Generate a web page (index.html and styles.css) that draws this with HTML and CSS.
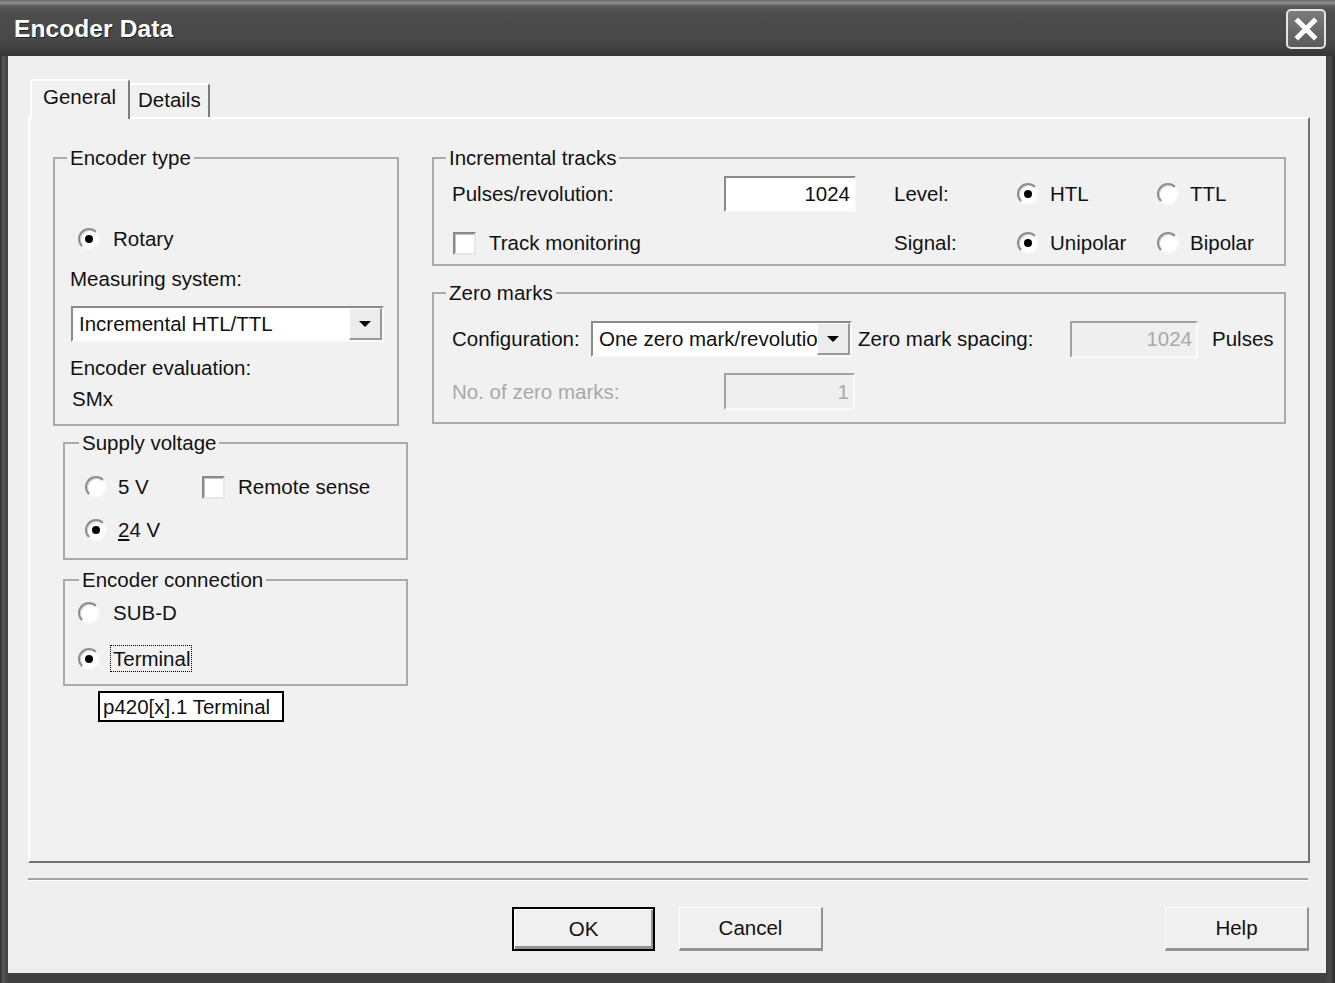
FILE: index.html
```html
<!DOCTYPE html>
<html>
<head>
<meta charset="utf-8">
<title>Encoder Data</title>
<link rel="stylesheet" href="styles.css">
</head>
<body>
<div class="window">
  <div class="titlebar">
    <span class="title">Encoder Data</span>
    <span class="close"><svg width="36" height="36" viewBox="0 0 36 36"><path d="M10 10 L26 26 M26 10 L10 26" stroke="#fff" stroke-width="5" stroke-linecap="square" fill="none"/></svg></span>
  </div>
  <div class="client">
    <div class="tabs">
      <div class="tab active">General</div>
      <div class="tab">Details</div>
    </div>
    <div class="panel">
      <div class="col-left">
        <fieldset class="grp grp-type">
          <legend>Encoder type</legend>
          <div class="opt rotary"><span class="radio on"></span><span>Rotary</span></div>
          <div class="lbl ms">Measuring system:</div>
          <div class="combo combo-ms"><span class="combo-text">Incremental HTL/TTL</span><span class="combo-btn"><span class="tri"></span></span></div>
          <div class="lbl ee">Encoder evaluation:</div>
          <div class="lbl smx">SMx</div>
        </fieldset>
        <fieldset class="grp grp-supply">
          <legend>Supply voltage</legend>
          <div class="supply-row first">
            <div class="opt v5"><span class="radio"></span><span>5 V</span></div>
            <div class="opt"><span class="check"></span><span>Remote sense</span></div>
          </div>
          <div class="supply-row second">
            <div class="opt v5"><span class="radio on"></span><span><u>2</u>4 V</span></div>
          </div>
        </fieldset>
        <fieldset class="grp grp-conn">
          <legend>Encoder connection</legend>
          <div class="opt conn first"><span class="radio"></span><span>SUB-D</span></div>
          <div class="opt conn second"><span class="radio on"></span><span class="focus">Terminal</span>
            <div class="tooltip">p420[x].1 Terminal</div>
          </div>
        </fieldset>
      </div>
      <div class="col-right">
        <fieldset class="grp grp-inc">
          <legend>Incremental tracks</legend>
          <div class="inc-grid">
            <div class="lbl">Pulses/revolution:</div>
            <div class="edit"><span>1024</span></div>
            <div></div>
            <div class="lbl">Level:</div>
            <div class="opt narrow"><span class="radio on"></span><span>HTL</span></div>
            <div class="opt narrow"><span class="radio"></span><span>TTL</span></div>
            <div class="opt track"><span class="check"></span><span>Track monitoring</span></div>
            <div class="lbl">Signal:</div>
            <div class="opt narrow"><span class="radio on"></span><span>Unipolar</span></div>
            <div class="opt narrow"><span class="radio"></span><span>Bipolar</span></div>
          </div>
        </fieldset>
        <fieldset class="grp grp-zero">
          <legend>Zero marks</legend>
          <div class="zero-row first">
            <div class="lbl w-config">Configuration:</div>
            <div class="combo combo-zero"><span class="combo-text">One zero mark/revolution</span><span class="combo-btn"><span class="tri"></span></span></div>
            <div class="lbl w-spacing">Zero mark spacing:</div>
            <div class="edit disabled w-spacing-edit"><span>1024</span></div>
            <div class="lbl pulses">Pulses</div>
          </div>
          <div class="zero-row second">
            <div class="lbl dis w-count">No. of zero marks:</div>
            <div class="edit disabled w-count-edit"><span>1</span></div>
          </div>
        </fieldset>
      </div>
    </div>
    <div class="separator"></div>
    <div class="buttons">
      <div class="btn default">OK</div>
      <div class="btn cancel">Cancel</div>
      <div class="btn help">Help</div>
    </div>
  </div>
</div>
</body>
</html>
```

FILE: styles.css
```css
* { box-sizing: border-box; }
html, body { margin: 0; padding: 0; }
body {
  width: 1335px;
  height: 983px;
  overflow: hidden;
  background: #3c3c3c;
  font-family: "Liberation Sans", Arial, sans-serif;
  font-size: 20.5px;
  color: #111;
}
.window {
  width: 1335px;
  height: 983px;
  display: flex;
  flex-direction: column;
  background: linear-gradient(90deg, #2c2c2c 0, #555 3px, #414141 8px, #414141 1326px, #4a4a4a 1330px, #2a2a2a 1335px);
}
.titlebar {
  height: 56px;
  flex: none;
  display: flex;
  align-items: center;
  justify-content: space-between;
  padding: 1px 9px 0 14px;
  background: linear-gradient(180deg, #6a6a6a 0, #8e8e8e 3px, #5a5a5a 6px, #4c4c4c 14px, #484848 40px, #3e3e3e 50px, #363636 56px);
}
.title {
  color: #fff;
  font-weight: bold;
  font-size: 24.5px;
  letter-spacing: 0.1px;
  text-shadow: 1px 1px 0 #222;
}
.close {
  width: 40px;
  height: 40px;
  border: 2px solid #e4e4e4;
  border-radius: 5px;
  background: linear-gradient(180deg, #7c7c7c, #5a5a5a);
  display: flex;
  align-items: center;
  justify-content: center;
}
.client {
  flex: 1;
  margin: 0 9px 10px 8px;
  background: #efefef;
  padding: 23px 16px 0 20px;
  display: flex;
  flex-direction: column;
}
.tabs {
  display: flex;
  align-items: flex-end;
  height: 40px;
  margin-left: 2px;
  margin-bottom: -2px;
  position: relative;
  z-index: 1;
}
.tab {
  background: #f1f1f1;
  line-height: 24px;
}
.tab.active {
  width: 100px;
  height: 40px;
  border-top: 2px solid #fff;
  border-left: 2px solid #fff;
  border-right: 2px solid #7c7c7c;
  border-radius: 3px 3px 0 0;
  padding: 4px 0 0 11px;
}
.tab:not(.active) {
  width: 80px;
  height: 34px;
  margin-bottom: 2px;
  border-top: 2px solid #fff;
  border-right: 2px solid #7c7c7c;
  border-radius: 0 3px 0 0;
  padding: 3px 0 0 8px;
}
.panel {
  height: 746px;
  flex: none;
  background: #f1f1f1;
  border-top: 2px solid #fff;
  border-left: 2px solid #fff;
  border-right: 2px solid #727272;
  border-bottom: 2px solid #727272;
  display: grid;
  grid-template-columns: 355px 854px;
  column-gap: 24px;
  align-items: start;
  padding: 27px 23px 0 23px;
}
.col-left, .col-right {
  display: flex;
  flex-direction: column;
  align-items: flex-start;
}
.grp {
  margin: 0;
  padding: 0;
  min-width: 0;
  border: 2px solid #aaaaaa;
  display: flex;
  flex-direction: column;
  align-items: flex-start;
}
.grp legend {
  padding: 0 3px;
  margin-left: 12px;
  line-height: 24px;
  height: 24px;
}
.lbl {
  line-height: 26px;
  height: 26px;
  white-space: nowrap;
}
.lbl.dis { color: #a9a9a9; }
.opt {
  display: flex;
  align-items: center;
  height: 26px;
  white-space: nowrap;
}
.radio {
  width: 22px;
  height: 22px;
  flex: none;
  border-radius: 50%;
  background: #fff;
  border: 2px solid;
  border-color: #8d8d8d #f8f8f8 #f8f8f8 #8d8d8d;
  box-shadow: inset 1px 1px 0 #d2d2d2;
  margin-right: 13px;
  display: flex;
  align-items: center;
  justify-content: center;
}
.radio.on::after {
  content: "";
  width: 8px;
  height: 8px;
  border-radius: 50%;
  background: #000;
}
.check {
  width: 23px;
  height: 23px;
  flex: none;
  background: #fff;
  border: 2px solid;
  border-color: #8a8a8a #e6e6e6 #e6e6e6 #8a8a8a;
  box-shadow: inset 1px 1px 0 #c4c4c4;
  margin-right: 13px;
}
.combo {
  height: 36px;
  background: #fff;
  border: 2px solid;
  border-color: #8a8a8a #fafafa #fafafa #8a8a8a;
  display: flex;
  align-items: center;
  overflow: hidden;
}
.combo-text {
  flex: 1;
  padding-left: 6px;
  white-space: nowrap;
  overflow: hidden;
}
.combo-btn {
  width: 33px;
  height: 32px;
  flex: none;
  background: #ececec;
  border: 1px solid;
  border-color: #fff #9a9a9a #9a9a9a #fff;
  border-bottom-width: 2px;
  border-right-width: 2px;
  display: flex;
  align-items: center;
  justify-content: center;
}
.tri {
  width: 0;
  height: 0;
  border-left: 6px solid transparent;
  border-right: 6px solid transparent;
  border-top: 6px solid #000;
}
.edit {
  height: 36px;
  background: #fff;
  border: 2px solid;
  border-color: #8a8a8a #fafafa #fafafa #8a8a8a;
  display: flex;
  align-items: center;
  justify-content: flex-end;
  padding-right: 4px;
}
.edit.disabled {
  background: #efefef;
  border-color: #a2a2a2 #fafafa #fafafa #a2a2a2;
  color: #a9a9a9;
  height: 37px;
}

/* Encoder type */
.grp-type { width: 346px; padding-bottom: 12px; }
.rotary { margin: 56px 0 0 23px; }
.ms { margin: 14px 0 0 15px; }
.combo-ms { margin: 14px 0 0 16px; width: 313px; }
.ee { margin: 13px 0 0 15px; }
.smx { margin: 5px 0 0 17px; }

/* Supply voltage */
.grp-supply { width: 345px; margin: 5px 0 0 10px; padding-bottom: 15px; }
.grp-supply legend { margin-left: 14px; }
.supply-row { display: flex; margin-left: 20px; }
.supply-row.first { margin-top: 19px; }
.supply-row.second { margin-top: 17px; }
.supply-row .v5 { width: 117px; }
.v5 .radio { margin-right: 11px; }

/* Encoder connection */
.grp-conn { width: 345px; margin: 8px 0 0 10px; padding-bottom: 11px; }
.grp-conn legend { margin-left: 14px; }
.conn { margin-left: 13px; }
.conn.first { margin-top: 8px; }
.conn.second { margin-top: 18px; height: 29px; position: relative; }
.conn.second .radio { margin-right: 10px; }
.focus {
  border: 1px dotted #000;
  padding: 0 1px 0 2px;
  line-height: 25px;
}
.tooltip {
  position: absolute;
  left: 20px;
  top: 47px;
  width: 186px;
  height: 31px;
  background: #fff;
  border: 2px solid #000;
  padding-left: 3px;
  line-height: 27px;
  z-index: 2;
}

/* Incremental tracks */
.grp-inc { width: 854px; }
.inc-grid {
  display: grid;
  grid-template-columns: 272px 132px 38px 123px 140px 1fr;
  grid-template-rows: 36px 26px;
  row-gap: 18px;
  align-items: center;
  padding: 6px 0 8px 18px;
}
.narrow .radio { margin-right: 11px; }
.track { grid-column: 1 / span 3; margin-left: 1px; }

/* Zero marks */
.grp-zero { width: 854px; margin-top: 15px; padding-bottom: 12px; }
.zero-row { display: flex; align-items: center; margin-left: 18px; }
.zero-row.first { margin-top: 16px; height: 36px; }
.zero-row.second { margin-top: 16px; height: 37px; }
.w-config { width: 139px; }
.combo-zero { width: 261px; }
.w-spacing { width: 212px; margin-left: 6px; }
.w-spacing-edit { width: 128px; }
.pulses { margin-left: 14px; }
.w-count { width: 272px; }
.w-count-edit { width: 131px; }

/* Footer */
.separator {
  margin-top: 15px;
  margin-right: 2px;
  height: 3px;
  border-top: 2px solid #a4a4a4;
  border-bottom: 1px solid #fff;
}
.buttons {
  display: flex;
  margin-top: 26px;
  height: 44px;
}
.btn {
  height: 44px;
  background: #f0f0f0;
  border-style: solid;
  border-color: #fff #939393 #939393 #fff;
  border-width: 1px 2px 3px 1px;
  display: flex;
  align-items: center;
  justify-content: center;
}
.btn.default {
  margin-left: 484px;
  width: 143px;
  border: 2px solid #000;
  box-shadow: inset 1px 1px 0 #fff, inset -2px -3px 0 #939393;
}
.btn.cancel { margin-left: 24px; width: 144px; }
.btn.help { margin-left: auto; margin-right: 1px; width: 144px; }
```
